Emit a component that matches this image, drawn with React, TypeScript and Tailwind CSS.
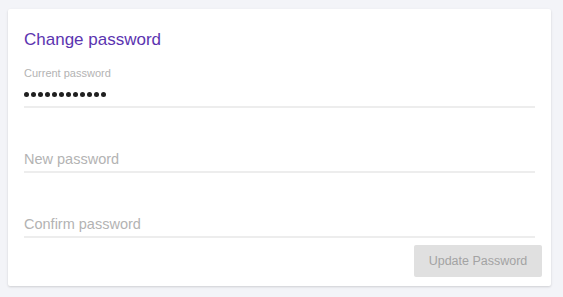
export default function App() {
  const dots = Array.from({ length: 12 });

  return (
    <div className="h-[297px] w-full overflow-hidden bg-[#f3f4f8] pt-[9px] pl-[8px] font-['Liberation_Sans',Arial,sans-serif]">
      <div className="w-[543px] h-[277px] bg-white rounded-[2px] shadow-[0_1px_3px_rgba(0,0,0,0.10),0_1px_2px_rgba(0,0,0,0.06)] pt-[21px] pb-[9px]">
        <div className="px-[16px]">
          <h2 className="text-[17px] leading-[20px] text-[#5b34b0]">Change password</h2>

          <div className="mt-[17px] border-b-2 border-[#ededed]">
            <label className="block text-[11px] leading-[13px] text-[#b3b3b3]">Current password</label>
            <div className="mt-[12px] mb-[9px] flex gap-[2px]">
              {dots.map((_, i) => (
                <span key={i} className="block w-[5px] h-[5px] rounded-full bg-[#1f1f1f]" />
              ))}
            </div>
          </div>

          <div className="mt-[41.5px] pb-[3.5px] border-b-2 border-[#ededed]">
            <input
              type="password"
              placeholder="New password"
              className="block w-full h-[18px] text-[14.5px] leading-[18px] bg-transparent outline-none placeholder:text-[#b3b3b3]"
            />
          </div>

          <div className="mt-[41.5px] pb-[3.5px] border-b-2 border-[#ededed]">
            <input
              type="password"
              placeholder="Confirm password"
              className="block w-full h-[18px] text-[14.5px] leading-[18px] bg-transparent outline-none placeholder:text-[#b3b3b3]"
            />
          </div>
        </div>

        <div className="mt-[7px] flex justify-end pr-[9px]">
          <button
            disabled
            className="w-[128px] h-[32px] rounded-[2px] bg-[#e0e0e0] text-[12.5px] text-[#a3a3a3]"
          >
            Update Password
          </button>
        </div>
      </div>
    </div>
  );
}
